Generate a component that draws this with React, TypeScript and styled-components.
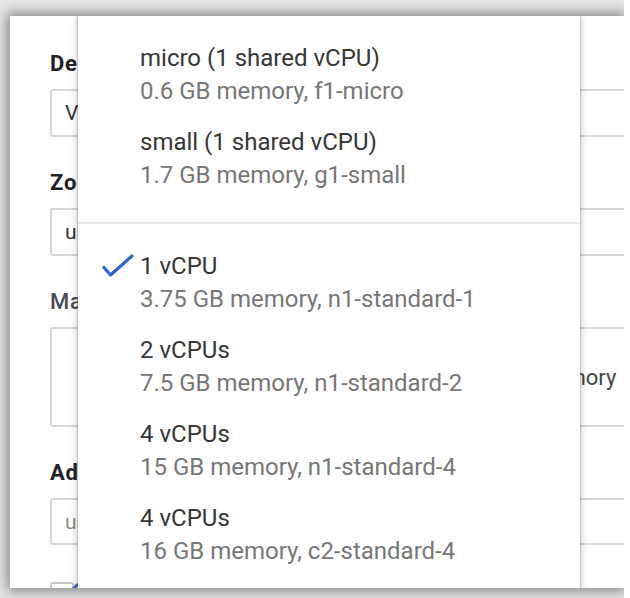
import React from "react";
import styled, { createGlobalStyle } from "styled-components";

const Global = createGlobalStyle`
  html, body { margin: 0; padding: 0; background: #ffffff; }
  body { font-family: Roboto, "Noto Sans", Arial, sans-serif; }
`;

const Page = styled.div`
  width: 630px;
  height: 598px;
  background: #ffffff;
  overflow: hidden;
`;

const Frame = styled.div`
  width: 624px;
  height: 598px;
  box-sizing: border-box;
  padding: 16px 0 10px 10px;
  background: #e6e6e6;
  overflow: hidden;
  display: flex;
`;

const Window = styled.div`
  position: relative;
  flex: 1;
  background: #ffffff;
  box-shadow: 0 0 12px 3px rgba(0, 0, 0, 0.42);
  overflow: hidden;
`;

const Form = styled.div`
  display: flex;
  flex-direction: column;
  gap: 34px;
  padding: 36px 0 0 40px;
`;

const Field = styled.div`
  display: flex;
  flex-direction: column;
  gap: 13px;
`;

const Label = styled.div<{ $bold?: boolean }>`
  font-size: 22px;
  line-height: 24px;
  letter-spacing: 0.8px;
  font-weight: ${(p) => (p.$bold ? 700 : 500)};
  color: ${(p) => (p.$bold ? "#202124" : "#4a4a58")};
  white-space: nowrap;
`;

const Input = styled.div<{ $h: number; $muted?: boolean }>`
  box-sizing: border-box;
  width: 620px;
  height: ${(p) => p.$h}px;
  border: 2px solid #d8d8d8;
  border-radius: 3px;
  display: flex;
  align-items: center;
  padding-left: 13px;
  font-size: 21px;
  color: ${(p) => (p.$muted ? "#8a8a8a" : "#333333")};
  white-space: nowrap;
`;

const CpuCell = styled.div`
  flex: 0 0 388px;
  color: transparent;
`;

const MemoryText = styled.div`
  color: #444444;
  font-size: 22px;
`;

const Checkbox = styled.div`
  width: 24px;
  height: 24px;
  margin-top: 3px;
  box-sizing: border-box;
  border: 2px solid #c8c8c8;
  border-radius: 3px;
  position: relative;
`;

const Tick = styled.svg`
  position: absolute;
  left: 4px;
  top: -2px;
`;

const Menu = styled.div`
  position: absolute;
  left: 68px;
  top: 0;
  bottom: 0;
  width: 502px;
  background: #ffffff;
  box-shadow: 0 0 0 1px rgba(0, 0, 0, 0.12), 0 0 7px 1px rgba(0, 0, 0, 0.22);
  overflow: hidden;
`;

const Group = styled.div<{ $pad: string; $divider?: boolean }>`
  padding: ${(p) => p.$pad};
  border-top: ${(p) => (p.$divider ? "2px solid #e8e8e8" : "none")};
`;

const Item = styled.div`
  display: grid;
  grid-template-columns: 62px 1fr;
  padding: 9px 0;
`;

const CheckCell = styled.div`
  height: 33px;
  display: flex;
  align-items: center;
  padding-left: 24px;
`;

const Lines = styled.div`
  display: flex;
  flex-direction: column;
`;

const Title = styled.div`
  font-size: 24px;
  line-height: 33px;
  color: #363636;
  white-space: nowrap;
`;

const Sub = styled.div`
  font-size: 24px;
  line-height: 33px;
  color: #777777;
  white-space: nowrap;
`;

type Opt = { title: string; sub: string; checked?: boolean };

const shared: Opt[] = [
  { title: "micro (1 shared vCPU)", sub: "0.6 GB memory, f1-micro" },
  { title: "small (1 shared vCPU)", sub: "1.7 GB memory, g1-small" },
];

const standard: Opt[] = [
  { title: "1 vCPU", sub: "3.75 GB memory, n1-standard-1", checked: true },
  { title: "2 vCPUs", sub: "7.5 GB memory, n1-standard-2" },
  { title: "4 vCPUs", sub: "15 GB memory, n1-standard-4" },
  { title: "4 vCPUs", sub: "16 GB memory, c2-standard-4" },
];

const Check = () => (
  <svg width="32" height="26" viewBox="0 0 32 26">
    <path
      d="M2 13.5 L8.5 21 L30 2"
      fill="none"
      stroke="#2f66d4"
      strokeWidth="3.2"
      strokeLinecap="round"
      strokeLinejoin="round"
    />
  </svg>
);

const OptionRow = ({ o }: { o: Opt }) => (
  <Item>
    <CheckCell>{o.checked ? <Check /> : null}</CheckCell>
    <Lines>
      <Title>{o.title}</Title>
      <Sub>{o.sub}</Sub>
    </Lines>
  </Item>
);

export default function App() {
  return (
    <Page>
      <Global />
      <Frame>
        <Window>
          <Form>
            <Field>
              <Label $bold>Deployment name</Label>
              <Input $h={48}>Vm-deployment-1</Input>
            </Field>
            <Field>
              <Label $bold>Zone</Label>
              <Input $h={48}>us-central1-a</Input>
            </Field>
            <Field>
              <Label>Machine type</Label>
              <Input $h={100}>
                <CpuCell>1 vCPU</CpuCell>
                <MemoryText>3.75 GB memory</MemoryText>
              </Input>
            </Field>
            <Field>
              <Label $bold>Additional settings</Label>
              <Input $h={47} $muted>
                us-central1
              </Input>
            </Field>
            <Checkbox>
              <Tick width="26" height="20" viewBox="0 0 26 20">
                <path d="M2 11 L8 17 L22 2" fill="none" stroke="#2f66d4" strokeWidth="3" />
              </Tick>
            </Checkbox>
          </Form>
          <Menu>
            <Group $pad="17px 0 21px">
              {shared.map((o, i) => (
                <OptionRow key={i} o={o} />
              ))}
            </Group>
            <Group $pad="17px 0 0" $divider>
              {standard.map((o, i) => (
                <OptionRow key={i} o={o} />
              ))}
            </Group>
          </Menu>
        </Window>
      </Frame>
    </Page>
  );
}
